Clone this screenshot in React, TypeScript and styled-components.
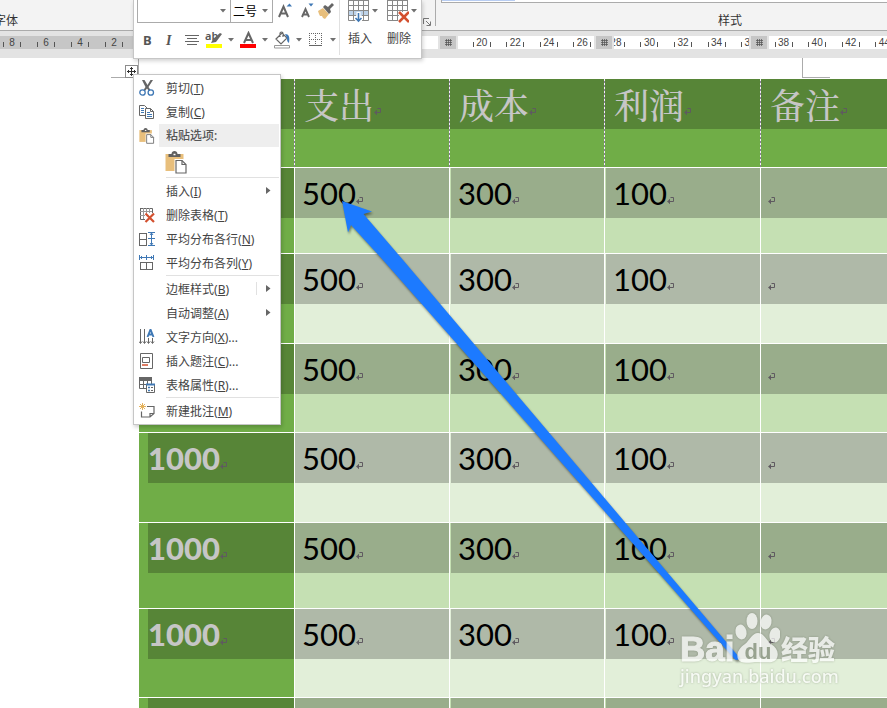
import React from "react";
import styled, { createGlobalStyle, css } from "styled-components";

const Global = createGlobalStyle`
  * { box-sizing: border-box; }
  html, body { margin: 0; background: #fff; }
  body { font-family: "Noto Sans", "Noto Sans CJK SC", sans-serif; font-size: 12px; color: #444; }
  button, input, select { font: inherit; color: inherit; }
`;

const Window = styled.div`
  position: relative;
  display: flex;
  flex-direction: column;
  height: 100vh;
  overflow: hidden;
`;

/* ---------- ribbon ---------- */
const Ribbon = styled.header`
  display: flex;
  flex: none;
  height: 31px;
  background: #f3f3f3;
  border-bottom: 1px solid #ababab;
  font-family: "Noto Sans CJK SC", sans-serif;
  color: #333;
`;
const FontGroup = styled.div`
  display: flex;
  align-items: flex-end;
  justify-content: space-between;
  flex: none;
  width: 442px;
  height: 26px;
  margin-left: -6px;
  padding-right: 4px;
  border-right: 1px solid #ababab;
`;
const StyleGroup = styled.div`
  display: flex;
  flex-direction: column;
  flex: 1;
  margin-left: 5px;
`;
const Gallery = styled.div`
  height: 3px;
  border: solid #ababab;
  border-width: 0 0 1px 1px;
  background: #fff;
`;
const GallerySelection = styled.div`
  width: 73px;
  height: 1px;
  background: #b8cdf2;
`;
const GroupTitle = styled.div`
  padding-left: 277px;
  margin-top: 10px;
  line-height: 14px;
`;
const FontTitle = styled.div`
  line-height: 12px;
`;

/* ---------- ruler ---------- */
const RulerBar = styled.div`
  display: flex;
  flex: none;
  height: 27px;
  padding: 5px 0 9px;
  background: #e3e3e3;
`;
const RulerMargin = styled.div`
  width: 139px;
  flex: none;
  background: #c6c6c6;
  overflow: hidden;
`;
const RulerTrack = styled.div`
  position: relative;
  flex: 1;
  min-width: 0;
  background: #fff;
  overflow: hidden;
`;
const Scale = styled.div<{ $count: number; $width: number; $start: number }>`
  display: grid;
  grid-template-columns: repeat(${(p) => p.$count}, 1fr);
  width: ${(p) => p.$width}px;
  margin-left: ${(p) => p.$start}px;
  height: 13px;
`;
const Mark = styled.div`
  display: flex;
  align-items: center;
  justify-content: center;
  font: 10px/13px "Liberation Sans", sans-serif;
  color: #444;
  &::before, &::after { content: ""; width: 1px; height: 5px; background: #555; margin-top: 3px; }
`;
const MarkValue = styled.span`
  width: 16px;
  text-align: center;
`;
const ColumnHandle = styled.div<{ $at: number }>`
  position: absolute;
  top: 0;
  left: ${(p) => p.$at}px;
  width: 20px;
  height: 13px;
  padding: 3px 5px 2px 5px;
  border: solid #e3e3e3;
  border-width: 0 2px;
  background: #c6c6c6;
  svg { display: block; }
`;

/* ---------- document ---------- */
const Page = styled.main`
  position: relative;
  flex: 1;
  min-height: 0;
  padding: 21px 0 0 139px;
  background: #fff;
`;
const Corner = styled.div<{ $side: "left" | "right" }>`
  position: absolute;
  top: 0;
  width: 28px;
  height: 20px;
  border-bottom: 1px solid #ababab;
  ${(p) =>
    p.$side === "left"
      ? css`left: 111px; border-right: 1px solid #ababab;`
      : css`left: 802px; border-left: 1px solid #ababab;`}
`;
const MoveHandle = styled.button`
  position: absolute;
  top: 7px;
  left: 125px;
  width: 13px;
  height: 13px;
  padding: 0;
  border: 1px solid #8c8c8c;
  background: #fff;
  svg { display: block; }
`;
const Grid = styled.table`
  width: 100%;
  table-layout: fixed;
  border-collapse: separate;
  border-spacing: 0;
  font-family: Lato, "Noto Sans CJK SC", sans-serif;
  font-size: 31px;
  color: #000;
`;
const Col = styled.col<{ $w?: number }>`
  ${(p) => p.$w && css`width: ${p.$w}px;`}
`;
const cellBase = css`
  padding: 0;
  vertical-align: top;
  text-align: left;
  border-bottom: 1px solid #fff;
`;
const HeadCell = styled.th<{ $first?: boolean }>`
  ${cellBase}
  background: #70ad47;
  font-family: "Noto Serif CJK SC", "Noto Sans CJK SC", serif;
  font-weight: 500;
  font-size: 35px;
  color: #c6c6c6;
  ${(p) => !p.$first && css`
    background: repeating-linear-gradient(#f4f0f6 0 2px, #8c7f99 2px 4px) 0 0 / 1px 100% no-repeat, #70ad47;
    padding-left: 1px;
  `}
`;
const RowHead = styled.th`
  ${cellBase}
  background: #70ad47;
  font-weight: 900;
  color: #c6c6c6;
`;
const Cell = styled.td<{ $odd: boolean }>`
  ${cellBase}
  border-left: 1px solid #fff;
  background: ${(p) => (p.$odd ? "#c5e0b3" : "#e2efd9")};
`;
const Selection = styled.div<{ $tone: "dark" | "mid" | "pale"; $gap?: number; $pad?: number }>`
  display: flex;
  align-items: center;
  height: 50px;
  margin-left: ${(p) => p.$gap ?? 0}px;
  padding-left: ${(p) => p.$pad ?? 7}px;
  line-height: 50px;
  background: ${(p) => ({ dark: "#578537", mid: "#99ad8b", pale: "#afb9a8" })[p.$tone]};
`;
const ReturnIcon = styled.svg`
  flex: none;
  margin-top: 15px;
`;
const ArrowLayer = styled.svg`
  position: absolute;
  top: 0;
  left: 0;
  pointer-events: none;
  filter: drop-shadow(1px 2px 1px rgba(0, 0, 0, 0.45));
`;
const Watermark = styled.div`
  position: absolute;
  top: 552px;
  left: 680px;
  width: 162px;
  color: #fff;
  opacity: 0.72;
  filter: drop-shadow(0 0 1px rgba(90, 100, 80, 0.6));
`;
const Brand = styled.div`
  display: flex;
  align-items: flex-end;
  height: 56px;
`;
const BrandLatin = styled.span`
  width: 54px;
  font: 700 35px/34px "Liberation Sans", sans-serif;
  -webkit-text-stroke: 1px #fff;
`;
const BrandHan = styled.span`
  margin-left: 1px;
  font: 900 27px/34px "Noto Sans CJK SC", sans-serif;
`;
const Site = styled.div`
  font: 500 18px/20px "Noto Sans", sans-serif;
`;

/* ---------- floating toolbar ---------- */
const MiniBar = styled.div`
  position: absolute;
  top: 0;
  left: 133px;
  display: flex;
  width: 289px;
  height: 59px;
  padding-left: 3px;
  background: #fff;
  border: solid #c6c6c6;
  border-width: 0 1px 1px;
  box-shadow: 1px 2px 4px rgba(0, 0, 0, 0.18);
`;
const Tools = styled.div`
  width: 203px;
  height: 55px;
  border-right: 1px solid #e1e1e1;
`;
const ToolRow = styled.div<{ $top?: boolean }>`
  display: flex;
  align-items: ${(p) => (p.$top ? "flex-start" : "center")};
  height: ${(p) => (p.$top ? 24 : 31)}px;
`;
const Combo = styled.label<{ $w: number }>`
  position: relative;
  display: flex;
  align-items: center;
  width: ${(p) => p.$w}px;
  height: 23px;
  margin-right: -1px;
  border: solid #ababab;
  border-width: 0 1px 1px;
  background: #fff;
  svg { position: absolute; right: 4px; top: 9px; pointer-events: none; }
`;
const ComboSelect = styled.select`
  width: 100%;
  height: 20px;
  padding: 0 2px;
  border: 0;
  background: transparent;
  appearance: none;
  font: 12px/18px "Noto Sans CJK SC", sans-serif;
  color: #000;
`;
const Tool = styled.button<{ $w: number }>`
  display: flex;
  align-items: center;
  justify-content: flex-start;
  flex: none;
  width: ${(p) => p.$w}px;
  height: 22px;
  padding: 0;
  border: 0;
  background: none;
  svg { display: block; flex: none; }
`;
const Stack = styled.button`
  display: flex;
  flex-direction: column;
  width: 39px;
  height: 48px;
  padding: 0 0 0 8px;
  border: 0;
  background: none;
  line-height: 18px;
  text-align: left;
`;
const StackTop = styled.span`
  display: flex;
  height: 30px;
  gap: 2px;
`;
const StackLabel = styled.span`
  white-space: nowrap;
`;

/* ---------- context menu ---------- */
const Menu = styled.ul`
  position: absolute;
  top: 74px;
  left: 133px;
  width: 148px;
  margin: 0;
  padding: 0 0 2px;
  list-style: none;
  background: #fff;
  border: 1px solid #c6c6c6;
  box-shadow: 1px 2px 4px rgba(0, 0, 0, 0.2);
`;
const MenuButton = styled.button`
  display: grid;
  grid-template-columns: 32px 1fr auto;
  align-items: center;
  width: 100%;
  height: 24px;
  padding: 1px 9px 0 0;
  border: 0;
  background: none;
  text-align: left;
  white-space: nowrap;
`;
const IconSlot = styled.span`
  padding-left: 5px;
  svg { display: block; }
`;
const SubArrow = styled.span<{ $split?: boolean }>`
  display: flex;
  align-items: center;
  height: 13px;
  padding-left: 9px;
  ${(p) => p.$split && css`border-left: 1px solid #e1e1e1;`}
`;
const PasteTitle = styled.li`
  display: grid;
  grid-template-columns: 25px 1fr;
  align-items: center;
  height: 24px;
  padding: 1px 1px 0 0;
  color: #555;
`;
const PasteBand = styled.span`
  height: 23px;
  padding-left: 7px;
  line-height: 23px;
  background: #eee;
  font-weight: 500;
`;
const PasteChoice = styled.li`
  height: 29px;
  padding: 4px 0 0 31px;
`;
const Divider = styled.li`
  height: 2px;
  margin: 0 1px 0 32px;
  border-bottom: 1px solid #e1e1e1;
`;

const GREY = "#666";
const BLUE = "#3f78b5";
const RED = "#d3502f";

const Caret = () => (
  <svg width="6" height="4"><path d="M0 0h6L3 3.5z" fill="#707070" /></svg>
);
const StackCaret = () => (
  <svg width="6" height="13"><path d="M0 9h6L3 12.5z" fill="#707070" /></svg>
);
const Return = () => (
  <ReturnIcon width="8" height="8" viewBox="0 0 8 8" fill="none" stroke="#5f5a60">
    <path d="M3.500 .5h3v4H1.500M2.500 2.500v4" />
    <path d="M0 4.500L3 2v5z" fill="#5f5a60" stroke="none" />
  </ReturnIcon>
);
const GridMarks = () => (
  <svg width="7" height="7" fill="none" stroke="#555">
    <path d="M1.500 0v7M3.500 0v7M5.500 0v7M0 1.500h7M0 3.500h7M0 5.500h7" strokeOpacity=".75" />
  </svg>
);
const Clipboard = ({ size }: { size: number }) => (
  <svg width={size} height={size} viewBox="0 0 22 23" fill="none">
    <path d="M0 3h18v17H0z" fill="#e8bf7c" />
    <path d="M3 6V3h3c0-4 6-4 6 0h3v3z" fill="#606060" />
    <path d="M8 3.500h2" stroke="#fff" strokeWidth="1.500" />
    <path d="M9 8h9l4 4v11H9z" fill="#fff" />
    <path d="M10.500 9.500h6l4 4V22h-10z" fill="#fff" stroke="#666" strokeWidth="1.200" />
    <path d="M16.500 9.500v4h4" stroke="#666" strokeWidth="1.200" />
  </svg>
);

const icons: Record<string, React.ReactNode> = {
  cut: (
    <svg width="16" height="16" viewBox="0 0 16 16" fill="none">
      <path d="M3 0l2.500 0L8.500 5 11.500 0H14L9.500 7l2 3-1.500 1-2-2.500L6 11l-1.500-1 2-3z" fill={GREY} />
      <circle cx="3.500" cy="12.500" r="2.700" stroke={BLUE} strokeWidth="1.300" />
      <circle cx="11.800" cy="12.500" r="2.700" stroke={BLUE} strokeWidth="1.300" />
    </svg>
  ),
  copy: (
    <svg width="16" height="16" viewBox="0 0 16 16" fill="none">
      <path d="M6 11.500H.5v-10h5l2.500 2.500" stroke={GREY} />
      <path d="M6.500 4.500h5l3 3v7h-8z" fill="#fff" stroke={GREY} />
      <path d="M11.500 4.500v3h3" stroke={GREY} />
      <path d="M2 4.500h3M2 6.500h3M2 8.500h3M8 8.500h3M8 10.500h5M8 12.500h5" stroke={BLUE} />
    </svg>
  ),
  remove: (
    <svg width="16" height="16" viewBox="0 0 16 16" fill="none">
      <path d="M1 1.500h12.500V6M1.500 1v11.500H6" stroke={GREY} />
      <path d="M1 4.500h12M1 8.500h5M4.500 1v11M7.500 1v5M10.500 1v5" stroke="#999" />
      <path d="M6.500 6.500l8.500 8.500M15 6.500L6.500 15" stroke={RED} strokeWidth="2.200" />
    </svg>
  ),
  rows: (
    <svg width="16" height="16" viewBox="0 0 16 16" fill="none">
      <path d="M.5 2v12.500M7.500 2v12.500M0 2.500h8M0 8.500h8M0 14.500h8" stroke={GREY} />
      <path d="M12.500 2v12M9 1.500h7M9 7.500h7M9 14.500h7M11 4l1.500-2L14 4M11 12l1.500 2 1.500-2" stroke={BLUE} />
    </svg>
  ),
  cols: (
    <svg width="16" height="16" viewBox="0 0 16 16" fill="none">
      <path d="M1 7.500h13M1 14.500h13M1.500 7v8M7.500 7v8M13.500 7v8" stroke={GREY} />
      <path d="M1 2.500h13M.5 0v5M7.500 0v5M14.500 0v5M3 1L1.500 2.500 3 4M12 1l1.500 1.500L12 4" stroke={BLUE} />
    </svg>
  ),
  direction: (
    <svg width="16" height="16" viewBox="0 0 16 16" fill="none">
      <path d="M1.500 0v14M5.500 0v14M9.500 9v5M13.500 9v5M0 12.500l1.500 2 1.500-2M4 12.500l1.500 2 1.500-2M8 12.500l1.500 2 1.500-2M12 12.500l1.500 2 1.500-2" stroke={GREY} />
      <path d="M8.500 8L11.500 .5 14.500 8M9.500 5.500h4" stroke={BLUE} strokeWidth="1.900" />
    </svg>
  ),
  caption: (
    <svg width="16" height="16" viewBox="0 0 16 16" fill="none">
      <path d="M1.500.5h12v15h-12zM3.500 4.500h7v5h-7z" stroke={GREY} />
      <path d="M3 12h6" stroke={RED} strokeWidth="1.500" />
    </svg>
  ),
  props: (
    <svg width="16" height="16" viewBox="0 0 16 16" fill="none">
      <path d="M0 0h13v4H0z" fill={GREY} />
      <path d="M.5 4v7.500H7M0 7.500h7M4.500 4v8M8.500 4v3M12.500 4v3" stroke={GREY} />
      <path d="M7.500 7.500h8v8h-8z" fill="#fff" stroke={GREY} />
      <path d="M7 7.500h9" stroke={BLUE} strokeWidth="2" />
      <path d="M9 10.500h2M9 13.500h2" stroke={BLUE} strokeWidth="1.500" />
      <path d="M12 10.500h2M12 13.500h2" stroke={GREY} />
    </svg>
  ),
  comment: (
    <svg width="16" height="16" viewBox="0 0 16 16" fill="none">
      <path d="M8 3.500h7v7l-4 3.500H2.500V8.500M11 14v-3.500h4" stroke={GREY} strokeWidth="1.200" />
      <path d="M3.500 0v7M0 3.500h7M1 1l5 5M6 1L1 6" stroke="#e5b25c" />
    </svg>
  ),
};

type Item = { text: string; k: string; tail?: string; icon?: string; sub?: boolean; split?: boolean };
const MenuItem = ({ text, k, tail = "", icon, sub, split }: Item) => (
  <li>
    <MenuButton>
      <IconSlot>{icon && icons[icon]}</IconSlot>
      <span>{text}(<u>{k}</u>){tail}</span>
      {sub && (
        <SubArrow $split={split}>
          <svg width="5" height="7"><path d="M0 0l4.500 3.500L0 7z" fill="#666" /></svg>
        </SubArrow>
      )}
    </MenuButton>
  </li>
);

const heads = ["支出", "成本", "利润", "备注"];
const rowHeights = [86, 90, 89, 90, 86, 89, 89];

const HeadRow = styled.tr`height: 89px;`;
const BodyRow = styled.tr<{ $h: number }>`height: ${(p) => p.$h}px;`;

export default function App() {
  return (
    <Window>
      <Global />
      <Ribbon>
        <FontGroup>
          <FontTitle>字体</FontTitle>
          <svg width="8" height="8" fill="none" stroke="#777">
            <path d="M.5 6V.5H6M3 3l4 4M7.500 3.500v4h-4" />
          </svg>
        </FontGroup>
        <StyleGroup>
          <Gallery><GallerySelection /></Gallery>
          <GroupTitle>样式</GroupTitle>
        </StyleGroup>
      </Ribbon>
      <RulerBar>
        <RulerMargin>
          <Scale $count={4} $width={136} $start={-5}>
            {[8, 6, 4, 2].map((n) => <Mark key={n}><MarkValue>{n}</MarkValue></Mark>)}
          </Scale>
        </RulerMargin>
        <RulerTrack>
          <Scale $count={13} $width={436} $start={326}>
            {Array.from({ length: 13 }, (_, i) => 20 + i * 2).map((n) => (
              <Mark key={n}><MarkValue>{n}</MarkValue></Mark>
            ))}
          </Scale>
          <ColumnHandle $at={299}><GridMarks /></ColumnHandle>
          <ColumnHandle $at={455}><GridMarks /></ColumnHandle>
          <ColumnHandle $at={610}><GridMarks /></ColumnHandle>
        </RulerTrack>
      </RulerBar>

      <Page>
        <Corner $side="left" />
        <Corner $side="right" />
        <MoveHandle aria-label="移动表格">
          <svg width="11" height="11" fill="none" stroke="#333">
            <path d="M5.500 1v9M1 5.500h9M4 2.500h3M4 8.500h3M2.500 4v3M8.500 4v3" />
          </svg>
        </MoveHandle>
        <Grid>
          <colgroup>
            <Col $w={155} /><Col $w={155} /><Col $w={155} /><Col $w={156} /><Col />
          </colgroup>
          <thead>
            <HeadRow>
              <HeadCell $first><Selection $tone="dark" /></HeadCell>
              {heads.map((h) => (
                <HeadCell key={h}><Selection $tone="dark" $pad={9}>{h}<Return /></Selection></HeadCell>
              ))}
            </HeadRow>
          </thead>
          <tbody>
            {rowHeights.map((height, r) => {
              const odd = r % 2 === 0;
              const tone = odd ? "mid" : "pale";
              return (
                <BodyRow key={r} $h={height}>
                  <RowHead scope="row"><Selection $tone="dark" $gap={9} $pad={0}>1000<Return /></Selection></RowHead>
                  <Cell $odd={odd}><Selection $tone={tone}>500<Return /></Selection></Cell>
                  <Cell $odd={odd}><Selection $tone={tone} $gap={1}>300<Return /></Selection></Cell>
                  <Cell $odd={odd}><Selection $tone={tone} $gap={1}>100<Return /></Selection></Cell>
                  <Cell $odd={odd}><Selection $tone={tone}><Return /></Selection></Cell>
                </BodyRow>
              );
            })}
          </tbody>
        </Grid>
        <ArrowLayer width="760" height="620" viewBox="0 58 760 620">
          <path
            d="M342 201L372 211.500L363.500 214L403 260L739 657Q739 661 735 659.500L383 260L351 225L348 232.500Z"
            fill="#1c7aff"
          />
        </ArrowLayer>
        <Watermark>
          <Brand>
            <BrandLatin>Bai</BrandLatin>
            <svg width="46" height="56" viewBox="0 0 46 56">
              <g fill="#fff">
                <ellipse cx="7" cy="22" rx="5.500" ry="7.500" transform="rotate(-12 7 22)" />
                <ellipse cx="18" cy="11" rx="5.500" ry="8" />
                <ellipse cx="32" cy="12" rx="5.500" ry="7.500" transform="rotate(12 32 12)" />
                <ellipse cx="41" cy="25" rx="5.500" ry="7.500" transform="rotate(10 41 25)" />
                <path d="M24 23c6 0 8 7 13 11 6 4 8 9 6 14-3 6-11 4-19 4s-17 3-20-3c-2-5 1-11 7-15 5-4 7-11 13-11z" />
              </g>
              <text x="24" y="49" textAnchor="middle" fontFamily="Liberation Sans" fontWeight="700" fontSize="22" fill="#8f9a86">du</text>
            </svg>
            <BrandHan>经验</BrandHan>
          </Brand>
          <Site>jingyan.baidu.com</Site>
        </Watermark>
      </Page>

      <MiniBar role="toolbar">
        <Tools>
          <ToolRow $top>
            <Combo $w={94}><ComboSelect aria-label="字体"><option></option></ComboSelect><Caret /></Combo>
            <Combo $w={43}><ComboSelect aria-label="字号"><option>二号</option></ComboSelect><Caret /></Combo>
            <Tool $w={23} aria-label="增大字号">
              <svg width="20" height="20" viewBox="0 0 20 20" fill="none">
                <path d="M7 16L11.500 5.500L16 16M8.500 12.500h6" stroke={GREY} strokeWidth="2" />
                <path d="M14.500 5.500L17.500 2.500L20 5.500z" fill={BLUE} />
              </svg>
            </Tool>
            <Tool $w={21} aria-label="减小字号">
              <svg width="20" height="20" viewBox="0 0 20 20" fill="none">
                <path d="M7 16L10.500 8L14 16M8 13.500h5" stroke={GREY} strokeWidth="1.900" />
                <path d="M13.500 2.500h5L16 5.500z" fill={BLUE} />
              </svg>
            </Tool>
            <Tool $w={18} aria-label="格式刷">
              <svg width="18" height="18" viewBox="0 0 18 18">
                <path d="M2 9l5-3 6 6-4 5-2-1-1-2-2 0-1-2z" fill="#e8bf7c" />
                <path d="M7 5l2-2 3 2 4-4 2 2-4 4 1 3-2 2z" fill={GREY} />
              </svg>
            </Tool>
          </ToolRow>
          <ToolRow>
            <Tool $w={21} aria-label="加粗">
              <svg width="20" height="16"><text x="6" y="13" fontFamily="Noto Sans" fontWeight="700" fontSize="13" fill="#555">B</text></svg>
            </Tool>
            <Tool $w={27} aria-label="倾斜">
              <svg width="20" height="16"><text x="8" y="13" fontFamily="Liberation Serif" fontStyle="italic" fontWeight="700" fontSize="14" fill="#555">I</text></svg>
            </Tool>
            <Tool $w={20} aria-label="居中">
              <svg width="14" height="12" stroke={GREY}><path d="M0 1.500h14M2 4.500h10M0 7.500h14M2 10.500h10" /></svg>
            </Tool>
            <Tool $w={23} aria-label="突出显示">
              <svg width="18" height="18" viewBox="0 0 18 18">
                <text x="0" y="9" fontFamily="Noto Sans" fontWeight="600" fontSize="11" fill="#555">ab</text>
                <path d="M6 12l2-4 7-6 2 1-6 8z" fill={GREY} />
                <path d="M1 13h16v4H1z" fill="#ff0" />
              </svg>
            </Tool>
            <Tool $w={12} aria-label="突出显示颜色"><Caret /></Tool>
            <Tool $w={22} aria-label="字体颜色">
              <svg width="17" height="18" viewBox="0 0 17 18" fill="none">
                <path d="M4 12L8.500 2L13 12M5.500 9h6" stroke={GREY} strokeWidth="2" />
                <path d="M0 13h16v4H0z" fill="#f00" />
              </svg>
            </Tool>
            <Tool $w={12} aria-label="颜色列表"><Caret /></Tool>
            <Tool $w={22} aria-label="底纹">
              <svg width="17" height="18" viewBox="0 0 17 18" fill="none">
                <path d="M2 8l6-6 5 5-6 6zM6 6V2.500c0-2 3-2 3 0V6" stroke={GREY} strokeWidth="1.200" />
                <path d="M11 3c4 0 5 3 4 9-2-1-2-3-2-5z" fill={BLUE} />
                <path d="M.5 14.500h15v2.500H.5z" stroke="#999" />
              </svg>
            </Tool>
            <Tool $w={13} aria-label="底纹列表"><Caret /></Tool>
            <Tool $w={21} aria-label="边框">
              <svg width="14" height="14" fill="none" stroke={GREY} strokeDasharray="1 1">
                <path d="M0 .5h13M0 6.500h13M.5 0v12M6.500 0v12M12.500 0v12" />
                <path d="M0 12.500h13" strokeDasharray="none" />
              </svg>
            </Tool>
            <Tool $w={6} aria-label="边框列表"><Caret /></Tool>
          </ToolRow>
        </Tools>
        <Stack>
          <StackTop>
            <svg width="22" height="23" viewBox="0 0 22 23" fill="none">
              <path d="M1 10h20v6H1z" fill="#bdd3ea" />
              <path d="M.5 0v20.500H8M20.500 0v20.500H14M5.500 0v20M15.500 0v20M10.500 0v11M0 .5h21M0 5.500h21M0 10.500h21M0 15.500h8M14 15.500h7" stroke="#888" />
              <path d="M10.500 12v9M7 17.500L10.500 21l3.500-3.500" stroke="#fff" strokeWidth="4" />
              <path d="M10.500 13v8M7.500 18l3 3 3-3" stroke={BLUE} strokeWidth="1.600" />
            </svg>
            <StackCaret />
          </StackTop>
          <StackLabel>插入</StackLabel>
        </Stack>
        <Stack>
          <StackTop>
            <svg width="22" height="23" viewBox="0 0 22 23" fill="none">
              <path d="M.5 0v20.500H11M20.500 0v11M5.500 0v20M15.500 0v12M10.500 0v20M0 .5h21M0 5.500h21M0 10.500h21M0 15.500h12" stroke="#888" />
              <path d="M12 12l10 10M22 12L12 22" stroke={RED} strokeWidth="2.600" />
            </svg>
            <StackCaret />
          </StackTop>
          <StackLabel>删除</StackLabel>
        </Stack>
      </MiniBar>

      <Menu>
        <MenuItem text="剪切" k="T" icon="cut" />
        <MenuItem text="复制" k="C" icon="copy" />
        <PasteTitle>
          <IconSlot><Clipboard size={16} /></IconSlot>
          <PasteBand>粘贴选项:</PasteBand>
        </PasteTitle>
        <PasteChoice>
          <Tool $w={22} aria-label="保留源格式"><Clipboard size={23} /></Tool>
        </PasteChoice>
        <Divider />
        <MenuItem text="插入" k="I" sub />
        <MenuItem text="删除表格" k="T" icon="remove" />
        <MenuItem text="平均分布各行" k="N" icon="rows" />
        <MenuItem text="平均分布各列" k="Y" icon="cols" />
        <Divider />
        <MenuItem text="边框样式" k="B" sub split />
        <MenuItem text="自动调整" k="A" sub />
        <MenuItem text="文字方向" k="X" tail="..." icon="direction" />
        <MenuItem text="插入题注" k="C" tail="..." icon="caption" />
        <MenuItem text="表格属性" k="R" tail="..." icon="props" />
        <Divider />
        <MenuItem text="新建批注" k="M" icon="comment" />
      </Menu>
    </Window>
  );
}
